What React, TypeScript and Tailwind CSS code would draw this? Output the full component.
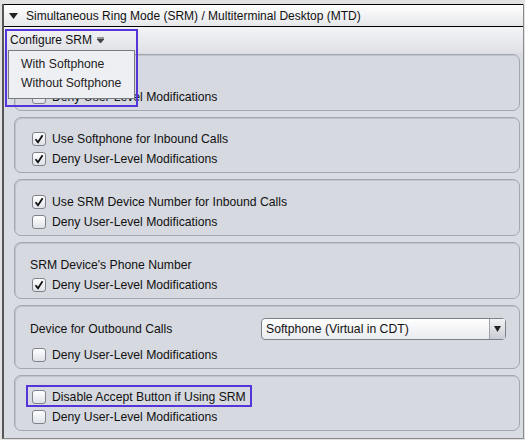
import { ReactNode } from 'react'

const font = { fontFamily: '"Liberation Sans", Arial, sans-serif' }

function CheckBox({ checked }: { checked?: boolean }) {
  return (
    <span className="flex h-[14px] w-[14px] shrink-0 items-center justify-center rounded-[3px] border border-[#7f838b] bg-gradient-to-b from-white to-[#dfe2e8]">
      {checked && (
        <svg width="10" height="10" viewBox="0 0 10 10">
          <path d="M1.5 5.2 L4 8.3 L8.6 1.2" fill="none" stroke="#111" strokeWidth="1.8" />
        </svg>
      )}
    </span>
  )
}

function CheckRow({ label, checked }: { label: string; checked?: boolean }) {
  return (
    <div className="flex h-[20px] items-center gap-[6px] pl-[17px]">
      <CheckBox checked={checked} />
      <span className="text-[12.2px] text-[#111]">{label}</span>
    </div>
  )
}

function Panel({ children, className }: { children: ReactNode; className?: string }) {
  return (
    <div
      className={`flex flex-col justify-end rounded-[7px] border border-[#a3a7ae] bg-[#d6d9e0] pb-[3px] shadow-[inset_1px_1px_0_#bfc3ca] ${className ?? ''}`}
    >
      {children}
    </div>
  )
}

export default function App() {
  return (
    <div style={font} className="relative h-[440px] w-[525px] bg-[#e2e2e2] pl-[2px] pt-[4px]">
      <div className="flex h-[435px] w-[522px] flex-col border-l-2 border-r border-b border-[#555] border-b-[#8a8a8a] border-r-[#8a8a8a] bg-[#d9dce2]">
        {/* section header */}
        <div className="flex h-[23px] items-center gap-[8px] border-y border-black bg-gradient-to-b from-white to-[#e6e7ea] pl-[5px]">
          <svg width="9" height="6" viewBox="0 0 9 6">
            <path d="M0 0 H9 L4.5 6 Z" fill="#222" />
          </svg>
          <span className="text-[12px] text-[#111]">
            Simultaneous Ring Mode (SRM) / Multiterminal Desktop (MTD)
          </span>
        </div>

        {/* toolbar */}
        <div className="flex h-[26px] items-center bg-gradient-to-b from-[#f3f4f6] to-[#dfe1e6] pl-[6px]">
          <span className="text-[12px] text-[#111]">Configure SRM</span>
          <svg className="ml-[5px]" width="7" height="6" viewBox="0 0 7 6">
            <path d="M0 0 H7 M0 2 H7 L3.5 6 Z" fill="#444" stroke="#444" strokeWidth="1" />
          </svg>
        </div>

        <div className="flex flex-col gap-[6px] pl-[10px] pr-[3px] pt-[1px]">
          <Panel className="h-[57px]">
            <CheckRow label="Enable SRM" />
            <CheckRow label="Deny User-Level Modifications" />
          </Panel>
          <Panel className="h-[56px]">
            <CheckRow label="Use Softphone for Inbound Calls" checked />
            <CheckRow label="Deny User-Level Modifications" checked />
          </Panel>
          <Panel className="h-[57px]">
            <CheckRow label="Use SRM Device Number for Inbound Calls" checked />
            <CheckRow label="Deny User-Level Modifications" />
          </Panel>
          <Panel className="h-[57px]">
            <div className="flex h-[20px] items-center pl-[15px] text-[12.2px] text-[#111]">
              SRM Device's Phone Number
            </div>
            <CheckRow label="Deny User-Level Modifications" checked />
          </Panel>
          <Panel className="h-[64px]">
            <div className="flex h-[24px] items-center justify-between pl-[15px] pr-[13px]">
              <span className="text-[12.2px] text-[#111]">Device for Outbound Calls</span>
              <div className="flex h-[22px] w-[245px] items-center rounded-[4px] border border-[#7d828a] bg-gradient-to-b from-white to-[#e9ebef] pl-[4px]">
                <span className="flex-1 text-[12.2px] text-[#111]">Softphone (Virtual in CDT)</span>
                <span className="flex h-full w-[16px] items-center justify-center border-l border-[#9da1a8] bg-gradient-to-b from-[#f2f3f5] to-[#c9ccd3]">
                  <svg width="7" height="6" viewBox="0 0 7 6">
                    <path d="M0 0 H7 L3.5 6 Z" fill="#222" />
                  </svg>
                </span>
              </div>
            </div>
            <div className="h-[4px]" />
            <CheckRow label="Deny User-Level Modifications" />
          </Panel>
          <Panel className="h-[56px]">
            <CheckRow label="Disable Accept Button if Using SRM" />
            <CheckRow label="Deny User-Level Modifications" />
          </Panel>
        </div>
      </div>

      {/* dropdown menu */}
      <div className="absolute left-[8px] top-[50px] flex h-[49px] w-[127px] flex-col border border-[#77797e] bg-[#eeeff3] pl-[12px] pt-[4px]">
        <span className="flex h-[19px] items-center text-[12.2px] text-[#222]">With Softphone</span>
        <span className="flex h-[19px] items-center text-[12.2px] text-[#222]">Without Softphone</span>
      </div>

      {/* highlight boxes */}
      <div className="pointer-events-none absolute left-[5px] top-[29px] h-[78px] w-[133px] border-2 border-[#5535d8]" />
      <div className="pointer-events-none absolute left-[26px] top-[385px] h-[22px] w-[226px] border-2 border-[#5535d8]" />
    </div>
  )
}
